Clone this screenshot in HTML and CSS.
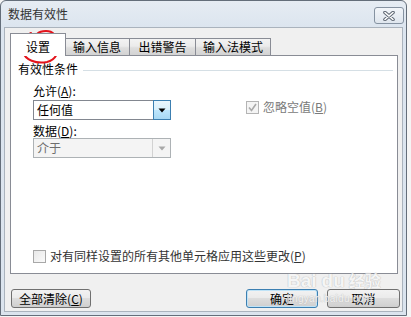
FILE: index.html
```html
<!DOCTYPE html>
<html lang="zh-CN">
<head>
<meta charset="utf-8">
<title>数据有效性</title>
<link rel="stylesheet" href="styles.css">
</head>
<body>
<div class="window">
  <div class="titlebar">
    <span class="title">数据有效性</span>
    <span class="close">
      <svg width="14" height="10" viewBox="0 0 14 10">
        <path d="M3 1.5 L11 8.5 M11 1.5 L3 8.5" stroke="#5f6874" stroke-width="3.6" stroke-linecap="round" fill="none"/>
        <path d="M3 1.5 L11 8.5 M11 1.5 L3 8.5" stroke="#ffffff" stroke-width="1.6" stroke-linecap="round" fill="none"/>
      </svg>
    </span>
  </div>
  <div class="client">
    <div class="tabs">
      <div class="tab active">设置</div>
      <div class="tab t2">输入信息</div>
      <div class="tab t3">出错警告</div>
      <div class="tab t4">输入法模式</div>
    </div>
    <div class="panel">
      <div class="group-head"><span>有效性条件</span><i class="rule"></i></div>
      <div class="indent">
        <div class="label">允许(<u>A</u>):</div>
        <div class="row">
          <div class="combo">
            <span class="val">任何值</span>
            <span class="drop hot"><svg width="8" height="5" viewBox="0 0 8 5"><path d="M0.5 0.5 H7.5 L4 4.5 Z" fill="#000"/></svg></span>
          </div>
          <div class="check disabled">
            <span class="box checked"><svg width="11" height="11" viewBox="0 0 11 11"><path d="M2 5.5 L4.5 8.5 L9 2" stroke="#a9a9a9" stroke-width="1.6" fill="none"/></svg></span>
            <span>忽略空值(<u>B</u>)</span>
          </div>
        </div>
        <div class="label l2">数据(<u>D</u>):</div>
        <div class="combo disabled">
          <span class="val">介于</span>
          <span class="drop"><svg width="8" height="5" viewBox="0 0 8 5"><path d="M0.5 0.5 H7.5 L4 4.5 Z" fill="#a8a8a8"/></svg></span>
        </div>
      </div>
      <div class="check bottom">
        <span class="box"></span>
        <span>对有同样设置的所有其他单元格应用这些更改(<u>P</u>)</span>
      </div>
    </div>
    <div class="buttons">
      <button class="btn wide">全部清除(<u>C</u>)</button>
      <button class="btn ok">确定</button>
      <button class="btn cancel">取消</button>
    </div>
  </div>
</div>

<svg class="annot" width="80" height="70" viewBox="0 0 80 70">
  <path d="M31 33 C24 36, 21 44, 23 52 C25 60, 36 64, 47 62 C56 60, 59 52, 58 44 C57 36, 53 31, 46 31 C42 31, 39 32, 37 34" stroke="#e3131b" stroke-width="2" fill="none" stroke-linecap="round"/>
</svg>

<div class="watermark">
  <div class="wm-main"><span>Bai</span><span class="wm-du">du</span><span class="wm-cn">经验</span></div>
  <div class="wm-url">jingyan.baidu.com</div>
</div>
</body>
</html>
```

FILE: styles.css
```css
html, body {
  margin: 0;
  padding: 0;
}

body {
  width: 411px;
  height: 317px;
  overflow: hidden;
  background: #f5f5f5;
  font-family: "Noto Sans CJK SC", "Liberation Sans", sans-serif;
  position: relative;
}

u {
  text-decoration: underline;
  text-underline-offset: 1px;
}

.window {
  width: 407px;
  height: 316px;
  box-sizing: border-box;
  border: 1px solid #646e7a;
  border-radius: 6px 6px 0 0;
  background: linear-gradient(#e6ecf3, #dce5ef 26px, #dbe4ee);
  display: flex;
  flex-direction: column;
}

.titlebar {
  height: 26px;
  flex: none;
  display: flex;
  align-items: flex-start;
}

.title {
  margin: 5px 0 0 7px;
  font-size: 12px;
  line-height: 16px;
  color: #333;
}

.close {
  margin: 6px 2px 0 auto;
  width: 30px;
  height: 17px;
  box-sizing: border-box;
  border: 1px solid #8592a1;
  border-radius: 3px;
  background: linear-gradient(#f2f5f9, #dfe6ee);
  display: flex;
  align-items: center;
  justify-content: center;
}

.client {
  flex: 1;
  margin: 0 3px 3px;
  border: 1px solid #aab3bd;
  background: #f0f0f0;
  padding: 5px 2px 0 5px;
  display: flex;
  flex-direction: column;
}

.tabs {
  height: 22px;
  flex: none;
  display: flex;
  align-items: flex-end;
}

.tab {
  height: 17px;
  box-sizing: border-box;
  border: 1px solid #898c95;
  border-bottom: 0;
  background: linear-gradient(#f3f3f3, #ebebeb 45%, #dedede 55%, #d3d3d3);
  font-size: 12px;
  line-height: 16px;
  text-align: center;
  color: #000;
}

.tab.active {
  width: 56px;
  height: 23px;
  margin-bottom: -1px;
  padding-top: 5px;
  background: #fff;
  position: relative;
  z-index: 1;
}

.t2 { width: 66px; margin-left: -2px; }
.t3 { width: 67px; margin-left: -1px; }
.t4 { width: 76px; margin-left: -1px; }

.panel {
  height: 219px;
  flex: none;
  box-sizing: border-box;
  margin-right: 2px;
  border: 1px solid #898c95;
  background: #fff;
  padding: 6px 4px 10px 7px;
  display: flex;
  flex-direction: column;
  font-size: 12px;
  line-height: 14px;
  color: #000;
}

.group-head {
  display: flex;
  align-items: flex-start;
  gap: 5px;
}

.rule {
  flex: 1;
  height: 1px;
  margin-top: 8px;
  background: #d5dfe5;
}

.indent {
  margin-left: 15px;
}

.label {
  margin-top: 8px;
}

.l2 {
  margin-top: 4px;
}

.row {
  display: flex;
  align-items: flex-start;
  margin-top: 2px;
}

.combo {
  width: 138px;
  height: 20px;
  box-sizing: border-box;
  border: 1px solid #828790;
  background: #fff;
  display: flex;
}

.val {
  flex: 1;
  padding-left: 3px;
  line-height: 18px;
}

.drop {
  width: 17px;
  display: flex;
  align-items: center;
  justify-content: center;
}

.drop.hot {
  width: 18px;
  box-sizing: border-box;
  margin: -1px -1px -1px 0;
  border: 1px solid #3c7fb1;
  background: linear-gradient(#eaf6fd, #d9f0fc 50%, #bee6fd 50%, #a7d9f5);
}

.combo.disabled {
  border-color: #adb2b5;
  background: #f4f4f4;
  color: #6d6d6d;
}

.combo.disabled .drop {
  border-left: 1px solid #d2d2d2;
}

.check {
  display: flex;
  align-items: center;
  gap: 4px;
}

.row .check {
  margin-left: 75px;
}

.check.disabled {
  color: #7a7a7a;
}

.box {
  width: 13px;
  height: 13px;
  box-sizing: border-box;
  border: 1px solid #a8a8a8;
  background: linear-gradient(135deg, #e8e8e8, #fafafa);
  display: flex;
  align-items: center;
  justify-content: center;
}

.box.checked {
  border-color: #b4b4b4;
  background: #f4f4f4;
}

.check.bottom {
  margin-top: auto;
  margin-left: 15px;
  color: #333;
}

.buttons {
  display: flex;
  margin-top: 15px;
  padding-left: 1px;
}

.btn {
  height: 19px;
  box-sizing: border-box;
  padding: 0;
  border: 1px solid #707070;
  border-radius: 3px;
  background: linear-gradient(#f2f2f2, #ebebeb 45%, #dddddd 50%, #cfcfcf);
  font-family: "Noto Sans CJK SC", "Liberation Sans", sans-serif;
  font-size: 12px;
  line-height: 17px;
  color: #000;
  text-align: center;
}

.btn.wide { width: 80px; }

.btn.ok {
  width: 72px;
  margin-left: auto;
  border-color: #3c7fb1;
  box-shadow: inset 0 0 0 1px #bfe3f7;
}

.btn.cancel {
  width: 73px;
  margin-left: 9px;
}

.annot {
  position: absolute;
  left: 0;
  top: 0;
}

.watermark {
  position: absolute;
  left: 287px;
  top: 269px;
  color: #f7f7f7;
  text-shadow: 0 0 1px #b9b9b9, 0 0 1px #b9b9b9;
  opacity: 0.85;
}

.wm-main {
  display: flex;
  align-items: baseline;
  font-family: "Liberation Sans", sans-serif;
  font-weight: bold;
  font-size: 19px;
  line-height: 22px;
}

.wm-du {
  margin-left: 5px;
}

.wm-cn {
  margin-left: 4px;
  font-family: "Noto Sans CJK SC", sans-serif;
  font-size: 16px;
}

.wm-url {
  font-family: "Liberation Sans", sans-serif;
  font-size: 10px;
  line-height: 11px;
  margin-top: 1px;
  letter-spacing: 0.3px;
}
```
